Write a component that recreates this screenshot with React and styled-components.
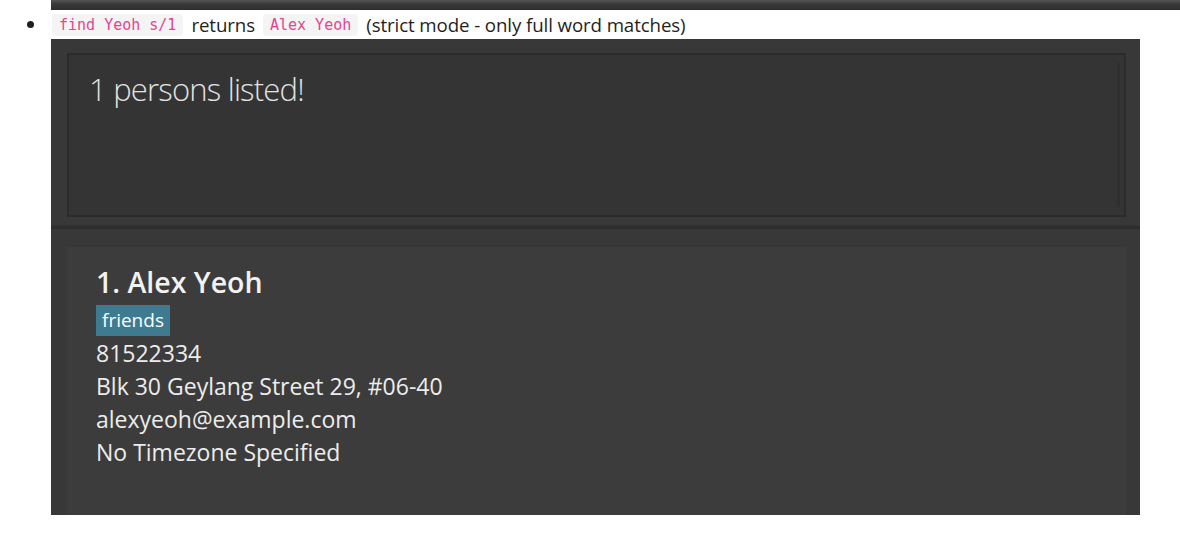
import React from 'react';
import styled, { createGlobalStyle } from 'styled-components';

const GlobalStyle = createGlobalStyle`
  body {
    margin: 0;
    background: #ffffff;
    font-family: "Open Sans", "Noto Sans", sans-serif;
  }
`;

const person = {
  name: 'Alex Yeoh',
  tags: ['friends'],
  phone: '81522334',
  address: 'Blk 30 Geylang Street 29, #06-40',
  email: 'alexyeoh@example.com',
  timezone: 'No Timezone Specified',
};

function App() {
  return (
    <Page>
      <GlobalStyle />
      <PrevShot />
      <BulletRow>
        <Bullet />
        <Code>find Yeoh s/1</Code>
        <Word>returns</Word>
        <Code>Alex Yeoh</Code>
        <Word>(strict mode - only full word matches)</Word>
      </BulletRow>
      <AppWindow>
        <ResultBox>
          <ResultText>1 persons listed!</ResultText>
          <ScrollTrack />
        </ResultBox>
        <Divider />
        <ListArea>
          <PersonCard>
            <Name>1. {person.name}</Name>
            <Tags>
              {person.tags.map((t) => (
                <Tag key={t}>{t}</Tag>
              ))}
            </Tags>
            <Field>{person.phone}</Field>
            <Field>{person.address}</Field>
            <Field>{person.email}</Field>
            <Field>{person.timezone}</Field>
          </PersonCard>
        </ListArea>
      </AppWindow>
    </Page>
  );
}

export default App;

const Page = styled.div`
  width: 1180px;
  height: 542px;
  overflow: hidden;
  display: flex;
  flex-direction: column;
`;

const PrevShot = styled.div`
  margin-left: 51px;
  height: 10px;
  background: linear-gradient(#555555, #3a3a3a 40%, #2e2e2e);
`;

const BulletRow = styled.div`
  display: flex;
  align-items: center;
  height: 29px;
  font-family: "Open Sans", "Noto Sans", sans-serif;
  font-size: 18.7px;
  color: #1f1f1f;
  gap: 8px;
`;

const Bullet = styled.span`
  width: 7px;
  height: 7px;
  border-radius: 50%;
  background: #1f1f1f;
  margin-left: 27px;
  margin-right: 10px;
`;

const Code = styled.code`
  font-family: "DejaVu Sans Mono", "Liberation Mono", monospace;
  font-size: 15px;
  color: #e8438f;
  background: #f4f4f4;
  border-radius: 4px;
  padding: 3px 7px;
  line-height: 16px;
`;

const Word = styled.span`
  line-height: 22px;
  letter-spacing: -0.1px;
`;

const AppWindow = styled.div`
  margin-left: 51px;
  width: 1089px;
  height: 476px;
  background: #383838;
  display: flex;
  flex-direction: column;
`;

const ResultBox = styled.div`
  position: relative;
  margin: 14px 14px 0 16px;
  height: 164px;
  box-sizing: border-box;
  background: #343434;
  border: 2px solid #2b2b2b;
  padding: 14px 20px;
`;

const ScrollTrack = styled.div`
  position: absolute;
  right: 4px;
  top: 8px;
  bottom: 8px;
  width: 3px;
  background: #2f2f2f;
`;

const ResultText = styled.div`
  font-family: "Open Sans", "Noto Sans", sans-serif;
  font-weight: 300;
  font-size: 31px;
  letter-spacing: -0.8px;
  color: #e2e2e2;
  line-height: 40px;
`;

const Divider = styled.div`
  margin-top: 8px;
  height: 4px;
  background: linear-gradient(#333333, #2a2a2a);
`;

const ListArea = styled.div`
  flex: 1;
  padding: 18px 14px 0 16px;
  background: #383838;
`;

const PersonCard = styled.div`
  height: 100%;
  background: #3c3c3c;
  padding: 17px 29px;
  box-sizing: border-box;
  color: #eeeeee;
  font-family: "Open Sans", "Noto Sans", sans-serif;
`;

const Name = styled.div`
  font-size: 28.5px;
  font-weight: 600;
  color: #f2f2f2;
  line-height: 36px;
`;

const Tags = styled.div`
  display: flex;
  gap: 6px;
  margin: 5px 0 1px;
`;

const Tag = styled.span`
  background: #3e7b91;
  color: #ffffff;
  font-size: 19px;
  line-height: 31px;
  padding: 0 6px;
`;

const Field = styled.div`
  font-size: 23px;
  line-height: 33px;
  color: #ececec;
`;
